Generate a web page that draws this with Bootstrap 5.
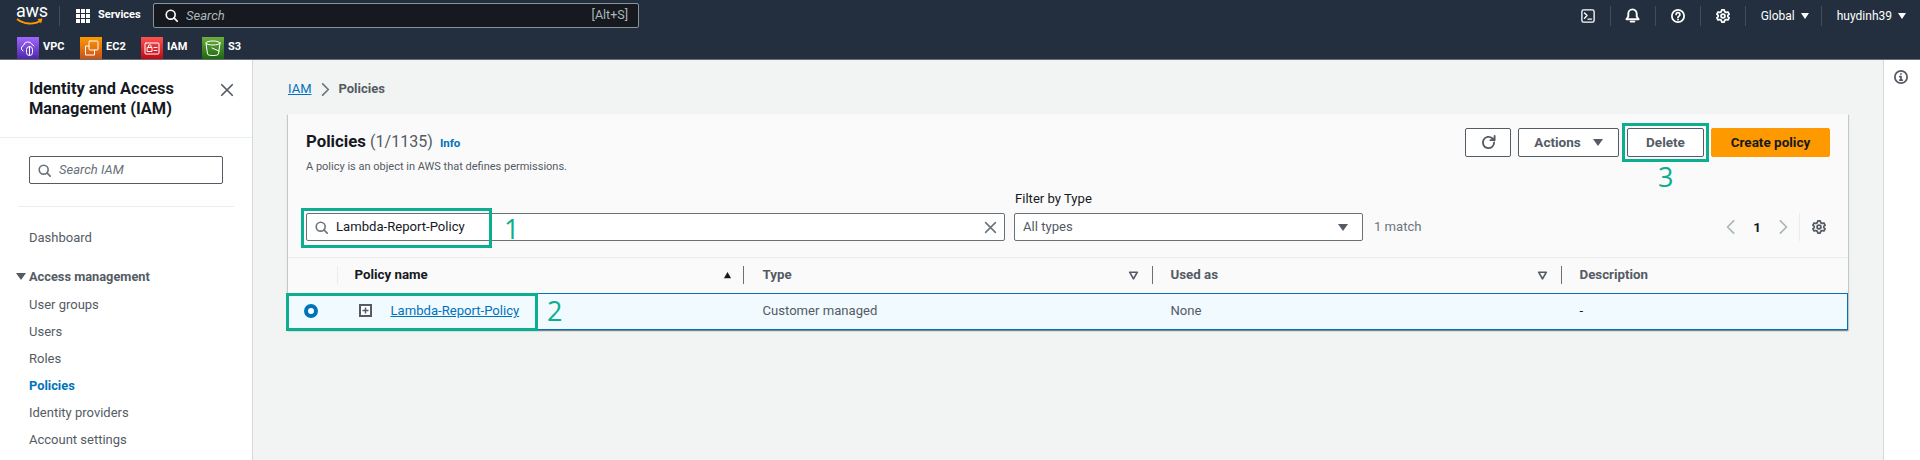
<!DOCTYPE html>
<html lang="en">
<head>
    <meta charset="UTF-8">
    <title>Policies | IAM</title>
    <link href="https://cdn.jsdelivr.net/npm/bootstrap@5.3.3/dist/css/bootstrap.min.css" rel="stylesheet">
    <style>
        html, body { height: 100%; overflow: hidden; }
        body { font-family: Roboto, "Liberation Sans", sans-serif; font-size: 13.1px; color: #16191f; background: #f2f3f3; }
        svg { display: block; flex: none; }
        .ico { fill: none; stroke: currentColor; stroke-width: 2; stroke-linecap: round; stroke-linejoin: round; }
        .ico.thin { stroke-width: 1; }
        .ico.mid { stroke-width: 1.5; }

        /* top bar */
        .aws-top { height: 60px; background: #232f3e; color: #fff; border-bottom: 1px solid #687078; }
        .bar-one { height: 31px; }
        .aws-logo { width: 28px; margin-left: 16px; line-height: 1; }
        .aws-logo span { display: block; font-size: 18px; height: 14px; line-height: 13px; letter-spacing: -.3px; }
        .bar-sep { width: 1px; height: 20px; background: #414d5c; }
        .logo-sep { margin: 0 16px 0 15px; }
        .svc-link { font-size: 11px; font-weight: 700; width: 55px; margin-left: 8px; }
        .top-search { width: 486px; height: 25px; background: #16191f; border: 1px solid #879596; border-radius: 2px; padding: 0 10px 0 11px; color: #aab7b8; }
        .top-search i { font-size: 13px; margin-left: 8px; }
        .top-search span { font-size: 12.5px; }
        .right-tools { color: #fff; font-size: 12px; }
        .tool-btn { width: 44px; height: 20px; }
        .tool-text { padding: 0 12px 0 15px; }
        .tool-end { padding-right: 14px; }
        .caret-w { width: 0; height: 0; border: 4px solid transparent; border-top: 6px solid #fff; border-bottom: 0; margin-left: 6px; }
        .bar-two { height: 28px; padding-top: 5px; padding-left: 17px; gap: 15px; font-size: 11px; font-weight: 700; }
        .fav-item { gap: 4px; width: 46px; }
        .fav-item:first-child { margin-right: 2px; }
        .fav-icon { width: 22px; height: 22px; flex: none; }
        .fav-vpc { background: linear-gradient(0deg, #4d27a8, #a166ff); }
        .fav-ec2 { background: linear-gradient(0deg, #c8511b, #ff9900); }
        .fav-iam { background: linear-gradient(0deg, #bd0816, #ff5252); }
        .fav-s3 { background: linear-gradient(0deg, #1b660f, #6cae3e); }

        /* page */
        .page-body { height: 400px; }
        .side-nav { width: 253px; background: #fff; border-right: 1px solid #d5dbdb; overflow: hidden; flex: none; }
        .side-head { height: 78px; padding: 19px 18px 0 29px; border-bottom: 1px solid #eaeded; }
        .side-title { font-size: 16.4px; line-height: 20px; font-weight: 700; width: 170px; }
        .side-close { margin-top: 4px; color: #545b64; }
        .side-search { margin: 18px 29px 22px 29px; height: 28px; border: 1px solid #545b64; border-radius: 2px; padding: 0 8px; color: #687078; }
        .side-search i { font-size: 13px; margin-left: 8px; }
        .side-rule { margin: 0 18px 17px; border-top: 1px solid #eaeded; }
        .side-link { display: block; height: 27px; line-height: 27px; padding-left: 29px; color: #545b64; text-decoration: none; font-size: 13px; }
        .side-link.is-on { color: #0073bb; font-weight: 700; font-size: 12.8px; }
        .side-group { margin-top: 12px; margin-bottom: 1px; height: 27px; padding-left: 16px; color: #545b64; font-weight: 700; font-size: 12.8px; }
        .caret-g { width: 0; height: 0; border: 5px solid transparent; border-top: 7px solid #545b64; border-bottom: 0; margin-right: 3px; }

        .main-area { padding: 19px 35px 0; }
        .crumbs { height: 20px; line-height: 20px; margin-bottom: 15px; gap: 10px; font-size: 13px; }
        .crumbs a { color: #0073bb; }
        .crumbs b { color: #545b64; font-weight: 700; margin-left: -2px; }
        .policy-card { border: 0; border-radius: 0; background: #fafafa; box-shadow: 0 1px 1px rgba(0,28,36,.3), 1px 1px 1px rgba(0,28,36,.15), -1px 1px 1px rgba(0,28,36,.15); }
        .card-top { padding: 14px 18px 16px; border-bottom: 1px solid #eaeded; }
        .top-row { height: 63px; }
        .title-line { margin-top: 3px; height: 20px; line-height: 20px; font-size: 16.8px; font-weight: 700; }
        .title-line span { font-weight: 400; color: #545b64; font-size: 16px; }
        .title-line a { font-size: 11.5px; color: #0073bb; font-weight: 700; text-decoration: none; margin-left: 3px; }
        .title-sub { font-size: 11px; line-height: 16px; margin-top: 8px; color: #545b64; }
        .aws-btn { height: 29px; font-size: 13.5px; font-weight: 700; border: 1px solid #545b64; border-radius: 2px; background: #fff; color: #545b64; padding: 0; }
        .btn-refresh { width: 46px; margin-right: 7px; }
        .btn-actions { width: 101px; margin-right: 8px; gap: 12px; }
        .btn-delete { width: 77px; margin-right: 7px; }
        .btn-create { width: 119px; background: #f90; border-color: #f90; color: #16191f; }
        .caret-d { width: 0; height: 0; border: 5px solid transparent; border-top: 7px solid #545b64; border-bottom: 0; }
        .field-label { line-height: 16px; margin-bottom: 6px; padding-left: 709px; }
        .filter-box { height: 28px; background: #fff; border: 1px solid #687078; border-radius: 2px; }
        .filter-search { width: 699px; padding: 0 7px 0 8px; margin-right: 9px; }
        .filter-search span { margin-left: 8px; }
        .filter-type { width: 349px; padding: 0 14px 0 8px; margin-right: 11px; color: #545b64; }
        .pager { color: #aab7b8; }
        .pager b { color: #16191f; font-size: 13.5px; margin: 0 15px; }
        .pager-sep { width: 1px; height: 28px; background: #eaeded; margin: 0 12px 0 9px; }
        .pager-end { margin-right: 4px; color: #545b64; }

        .policy-table { table-layout: fixed; width: 1560px; margin: 0; --bs-table-bg: transparent; }
        .policy-table th, .policy-table td { padding: 0 0 0 19px; vertical-align: middle; border: 0; }
        .policy-table th { height: 35px; font-size: 13.3px; color: #545b64; font-weight: 700; }
        .policy-table th.is-sorted { color: #16191f; padding-left: 17px; }
        .th-inner { height: 18px; }
        .th-sep { width: 1px; height: 18px; background: #687078; margin-left: 13px; margin-right: -1px; }
        .is-sorted .th-sep { margin-left: 11px; margin-right: 0; }
        .first-sep { width: 1px; height: 18px; background: #eaeded; margin-left: auto; }
        .col-pick { width: 49px; }
        .col-name { width: 406px; }
        .col-type { width: 408px; }
        .col-used { width: 409px; }
        .sel-row td { height: 36px; background: #f1faff; color: #16191f; border-top: 1px solid #0073bb; border-bottom: 1px solid #0073bb; }
        .policy-table .sel-row td:first-child { border-left: 1px solid #0073bb; }
        .policy-table .sel-row td:last-child { border-right: 1px solid #0073bb; }
        .policy-table .sel-row td.name-cell { padding-left: 21px; }
        .sel-row td.type-cell { color: #545b64; }
        .radio-on { width: 14px; height: 14px; border: 4px solid #0073bb; border-radius: 50%; background: #fff; margin-left: -4px; }
        .policy-link { color: #0073bb; margin-left: 19px; }

        /* green annotations from the screenshot */
        .mark-box { position: absolute; border: 3px solid #0bae8e; pointer-events: none; }
        .mark-num { position: absolute; color: #0bae8e; font-family: "Open Sans", sans-serif; font-size: 27px; line-height: 1; }
        .mark-search { left: -6px; top: -6px; width: 191px; height: 40px; }
        .num-search { left: 197px; top: 1px; }
        .mark-delete { left: -5px; top: -5px; width: 87px; height: 39px; }
        .num-delete { left: 31px; top: 35px; }
        .mark-row { left: -3px; top: -1px; width: 252px; height: 38px; }
        .num-row { left: 258px; top: 3px; }

        .help-rail { width: 37px; background: #fff; border-left: 1px solid #d5dbdb; flex: none; padding: 10px 0 0 10px; color: #545b64; }
    </style>
</head>
<body>
    <svg width="0" height="0" class="position-absolute">
        <symbol id="i-search" viewBox="0 0 16 16"><circle cx="7" cy="7" r="5.5"/><path d="M11 11l4 4"/></symbol>
        <symbol id="i-gear" viewBox="0 0 16 16"><circle cx="8" cy="8" r="2.2"/><path d="M6.600 1h2.800l.5 2 1.700 1 2-.6 1.400 2.400-1.500 1.400v1.600l1.500 1.400-1.400 2.400-2-.6-1.700 1-.5 2H6.600l-.5-2-1.700-1-2 .6L1 10.200l1.500-1.400V7.200L1 5.800l1.400-2.400 2 .6 1.700-1z"/></symbol>
        <symbol id="i-close" viewBox="0 0 16 16"><path d="M2 2l12 12M14 2L2 14"/></symbol>
        <symbol id="i-left" viewBox="0 0 16 16"><path d="M11 1L4 8l7 7"/></symbol>
        <symbol id="i-right" viewBox="0 0 16 16"><path d="M5 1l7 7-7 7"/></symbol>
        <symbol id="i-sort" viewBox="0 0 10 10"><path d="M1.500 2h7L5 8z"/></symbol>
    </svg>

    <header class="aws-top">
        <div class="bar-one d-flex align-items-center">
            <div class="aws-logo">
                <span>aws</span>
                <svg width="28" height="9" viewBox="0 0 28 9"><path d="M1 1c7 5.500 17 6 24 1.500" fill="none" stroke="#f90" stroke-width="1.800"/><path d="M21.500 1l5-.5-1.500 5z" fill="#f90"/></svg>
            </div>
            <div class="bar-sep logo-sep"></div>
            <svg width="14" height="14" viewBox="0 0 14 14" fill="#fff"><rect width="4" height="4"/><rect x="5" width="4" height="4"/><rect x="10" width="4" height="4"/><rect y="5" width="4" height="4"/><rect x="5" y="5" width="4" height="4"/><rect x="10" y="5" width="4" height="4"/><rect y="10" width="4" height="4"/><rect x="5" y="10" width="4" height="4"/><rect x="10" y="10" width="4" height="4"/></svg>
            <div class="svc-link">Services</div>
            <div class="top-search d-flex align-items-center">
                <svg class="ico text-white" width="13" height="13"><use href="#i-search"/></svg>
                <i>Search</i>
                <span class="ms-auto">[Alt+S]</span>
            </div>
            <div class="right-tools ms-auto d-flex align-items-center">
                <div class="tool-btn d-flex justify-content-center align-items-center">
                    <svg class="ico mid" width="14" height="14" viewBox="0 0 16 16"><rect x="1" y="1" width="14" height="14" rx="2"/><path d="M4 4.500L7 7.500 4 10.500M8 11.500h4"/></svg>
                </div>
                <div class="bar-sep"></div>
                <div class="tool-btn d-flex justify-content-center align-items-center">
                    <svg class="ico" width="15" height="15" viewBox="0 0 16 16"><path d="M1.500 12h13L12.500 9V6a4.500 4.500 0 0 0-9 0v3zM6 14.500h4"/></svg>
                </div>
                <div class="bar-sep"></div>
                <div class="tool-btn d-flex justify-content-center align-items-center">
                    <svg class="ico" width="14" height="14" viewBox="0 0 16 16"><circle cx="8" cy="8" r="7"/><path d="M5.800 6.200a2.200 2.200 0 1 1 3.200 2c-.7.400-1 .8-1 1.600M8 12v.2"/></svg>
                </div>
                <div class="bar-sep"></div>
                <div class="tool-btn d-flex justify-content-center align-items-center">
                    <svg class="ico" width="14" height="14"><use href="#i-gear"/></svg>
                </div>
                <div class="bar-sep"></div>
                <div class="tool-text d-flex align-items-center">Global<span class="caret-w"></span></div>
                <div class="bar-sep"></div>
                <div class="tool-text tool-end d-flex align-items-center">huydinh39<span class="caret-w"></span></div>
            </div>
        </div>
        <div class="bar-two d-flex">
            <div class="fav-item d-flex align-items-center">
                <div class="fav-icon fav-vpc"><svg class="ico thin" width="22" height="22" viewBox="0 0 22 22"><path d="M6 14a3 3 0 0 1 .5-5.500 4.500 4.500 0 0 1 8.500-1 3.500 3.500 0 0 1 2 1.500"/><rect x="9.500" y="9.500" width="6" height="9" rx="3"/><path d="M12.500 10v8"/></svg></div>VPC
            </div>
            <div class="fav-item d-flex align-items-center">
                <div class="fav-icon fav-ec2"><svg class="ico thin" width="22" height="22" viewBox="0 0 22 22"><rect x="9" y="4" width="9" height="9" rx="1"/><path d="M9 9H5.500v9h9v-5"/></svg></div>EC2
            </div>
            <div class="fav-item d-flex align-items-center">
                <div class="fav-icon fav-iam"><svg class="ico thin" width="22" height="22" viewBox="0 0 22 22"><rect x="4" y="6" width="14" height="11" rx="1"/><rect x="6.500" y="10.500" width="4.500" height="4"/><path d="M7.500 10.500V9a1.200 1.200 0 0 1 2.500 0v1.500M13 10.500h3M13 13.500h3"/></svg></div>IAM
            </div>
            <div class="fav-item d-flex align-items-center">
                <div class="fav-icon fav-s3"><svg class="ico thin" width="22" height="22" viewBox="0 0 22 22"><ellipse cx="11" cy="6" rx="7" ry="2"/><path d="M4 6l1.500 11c.2 1 2.500 1.500 5.500 1.500s5.300-.5 5.500-1.500L18 6M10 11l7 3"/></svg></div>S3
            </div>
        </div>
    </header>

    <div class="page-body d-flex">
        <nav class="side-nav">
            <div class="side-head d-flex justify-content-between">
                <div class="side-title">Identity and Access Management (IAM)</div>
                <svg class="ico side-close" width="14" height="14"><use href="#i-close"/></svg>
            </div>
            <div class="side-search d-flex align-items-center">
                <svg class="ico" width="13" height="13"><use href="#i-search"/></svg>
                <i>Search IAM</i>
            </div>
            <div class="side-rule"></div>
            <a class="side-link" href="#">Dashboard</a>
            <div class="side-group d-flex align-items-center"><span class="caret-g"></span>Access management</div>
            <a class="side-link" href="#">User groups</a>
            <a class="side-link" href="#">Users</a>
            <a class="side-link" href="#">Roles</a>
            <a class="side-link is-on" href="#">Policies</a>
            <a class="side-link" href="#">Identity providers</a>
            <a class="side-link" href="#">Account settings</a>
        </nav>

        <main class="main-area flex-grow-1">
            <div class="crumbs d-flex align-items-center">
                <a href="#">IAM</a>
                <svg class="ico text-secondary" width="9" height="13" viewBox="0 0 9 16"><path d="M1 1l7 7-7 7"/></svg>
                <b>Policies</b>
            </div>

            <div class="card policy-card">
                <div class="card-top">
                    <div class="top-row d-flex justify-content-between align-items-start">
                        <div>
                            <div class="title-line">Policies <span>(1/1135)</span> <a href="#">Info</a></div>
                            <div class="title-sub">A policy is an object in AWS that defines permissions.</div>
                        </div>
                        <div class="d-flex">
                            <button class="aws-btn btn-refresh d-flex justify-content-center align-items-center">
                                <svg class="ico" width="15" height="15" viewBox="0 0 16 16"><path d="M14 8a6 6 0 1 1-2-4.500L14 5.500M14.500 1v4.500H10"/></svg>
                            </button>
                            <button class="aws-btn btn-actions d-flex justify-content-center align-items-center">Actions<span class="caret-d"></span></button>
                            <div class="position-relative">
                                <button class="aws-btn btn-delete">Delete</button>
                                <div class="mark-box mark-delete"></div>
                                <div class="mark-num num-delete">3</div>
                            </div>
                            <button class="aws-btn btn-create">Create policy</button>
                        </div>
                    </div>
                    <div class="field-label">Filter by Type</div>
                    <div class="d-flex align-items-center">
                        <div class="filter-box filter-search d-flex align-items-center position-relative">
                            <svg class="ico text-secondary" width="13" height="13"><use href="#i-search"/></svg>
                            <span>Lambda-Report-Policy</span>
                            <svg class="ico ms-auto text-secondary" width="13" height="13"><use href="#i-close"/></svg>
                            <div class="mark-box mark-search"></div>
                            <div class="mark-num num-search">1</div>
                        </div>
                        <div class="filter-box filter-type d-flex align-items-center justify-content-between">All types<span class="caret-d"></span></div>
                        <div class="text-secondary-emphasis">1 match</div>
                        <div class="pager ms-auto d-flex align-items-center">
                            <svg class="ico" width="14" height="14"><use href="#i-left"/></svg>
                            <b>1</b>
                            <svg class="ico" width="14" height="14"><use href="#i-right"/></svg>
                            <div class="pager-sep"></div>
                            <svg class="ico pager-end" width="14" height="14"><use href="#i-gear"/></svg>
                        </div>
                    </div>
                </div>
                <table class="table policy-table">
                    <colgroup>
                        <col class="col-pick"><col class="col-name"><col class="col-type"><col class="col-used"><col>
                    </colgroup>
                    <thead>
                        <tr>
                            <th><div class="d-flex"><span class="first-sep"></span></div></th>
                            <th class="is-sorted"><div class="th-inner d-flex align-items-center">Policy name<svg class="ms-auto" width="9" height="9" viewBox="0 0 10 10" fill="#16191f"><path d="M5 1l4 7H1z"/></svg><span class="th-sep"></span></div></th>
                            <th><div class="th-inner d-flex align-items-center">Type<svg class="ico mid ms-auto" width="11" height="11"><use href="#i-sort"/></svg><span class="th-sep"></span></div></th>
                            <th><div class="th-inner d-flex align-items-center">Used as<svg class="ico mid ms-auto" width="11" height="11"><use href="#i-sort"/></svg><span class="th-sep"></span></div></th>
                            <th>Description</th>
                        </tr>
                    </thead>
                    <tbody>
                        <tr class="sel-row">
                            <td class="position-relative"><div class="radio-on"></div>
                                <div class="mark-box mark-row"></div>
                                <div class="mark-num num-row">2</div>
                            </td>
                            <td class="name-cell"><div class="d-flex align-items-center">
                                <svg width="13" height="13" viewBox="0 0 13 13"><rect x="1" y="1" width="11" height="11" fill="#fff" stroke="#545b64" stroke-width="2"/><path d="M6.500 3.500v6M3.500 6.500h6" stroke="#545b64" stroke-width="1.500"/></svg>
                                <a class="policy-link" href="#">Lambda-Report-Policy</a>
                            </div></td>
                            <td class="type-cell">Customer managed</td>
                            <td class="type-cell">None</td>
                            <td>-</td>
                        </tr>
                    </tbody>
                </table>
            </div>
        </main>

        <aside class="help-rail">
            <svg class="ico" width="14" height="14" viewBox="0 0 16 16"><circle cx="8" cy="8" r="7"/><path d="M8 7.500v4M6.500 7.500H8M6.500 11.500h3M8 4.500v.2"/></svg>
        </aside>
    </div>
</body>
</html>
